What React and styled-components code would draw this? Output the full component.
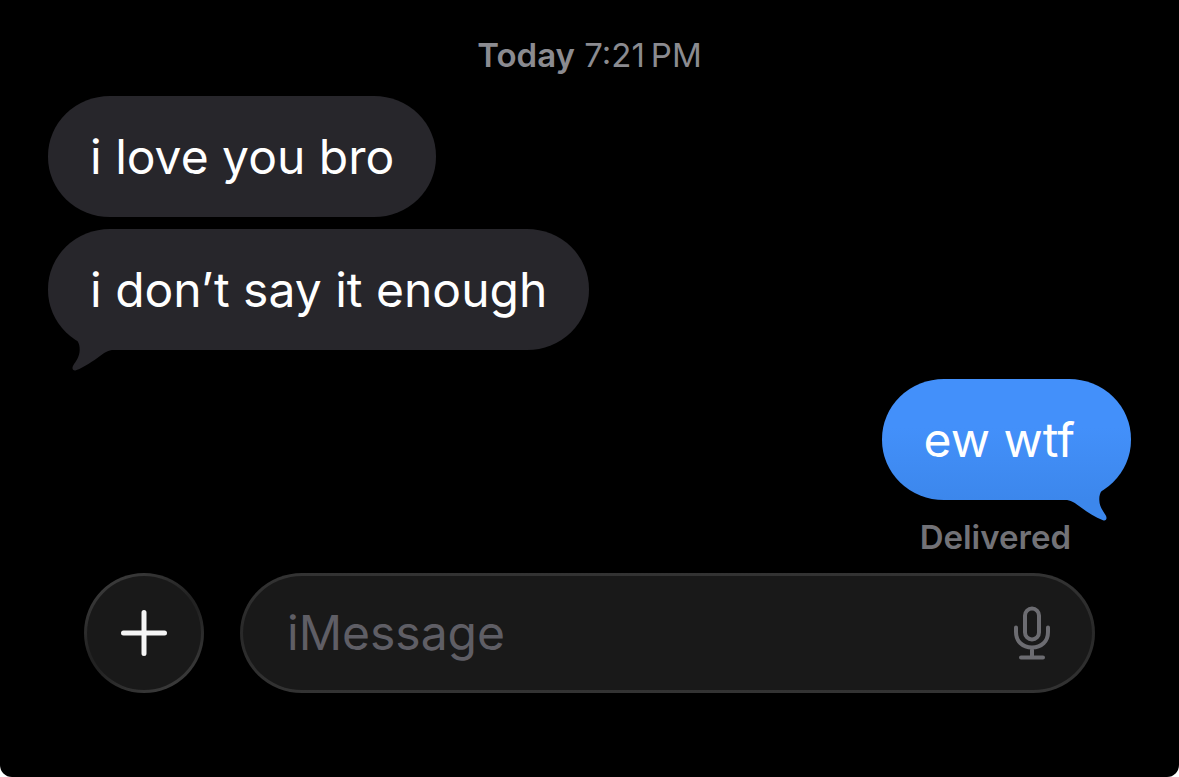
import React, { useState } from 'react';
import styled, { createGlobalStyle } from 'styled-components';

const GlobalStyle = createGlobalStyle`
  * {
    box-sizing: border-box;
  }

  body {
    margin: 0;
    background-color: #fff;
    font-family: Inter, 'Liberation Sans', sans-serif;
  }
`;

const Screen = styled.main`
  display: flex;
  flex-direction: column;
  min-height: 100vh;
  padding: 35px 48px 84px;
  border-radius: 0 0 12px 12px;
  background-color: #000;
`;

const Timestamp = styled.time`
  align-self: center;
  margin-bottom: 21px;
  font-size: 33px;
  line-height: 40px;
  color: #8b8b90;
`;

const Day = styled.span`
  font-weight: 600;
`;

const Messages = styled.div`
  display: flex;
  flex-direction: column;
  gap: 12px;
`;

const Bubble = styled.div`
  position: relative;
  align-self: ${(props) => (props.$sent ? 'flex-end' : 'flex-start')};
  margin-top: ${(props) => (props.$sent ? '17px' : '0')};
  padding: ${(props) => (props.$sent ? '31px 56px 30px 42px' : '31px 42px 30px')};
  border-radius: 62px / 60px;
  font-size: 48px;
  line-height: 60px;
  color: #fff;
  background: ${(props) =>
    props.$sent ? 'linear-gradient(#4390fa 40%, #3c87ec)' : '#27262b'};
`;

const TailShape = styled.svg`
  position: absolute;
  bottom: -22px;
  ${(props) => (props.$sent ? 'right: 0;' : 'left: 0;')}
  width: 70px;
  height: 42px;
  transform: ${(props) => (props.$sent ? 'scaleX(-1)' : 'none')};
`;

const Status = styled.p`
  align-self: flex-end;
  margin: 17px 60px 16px 0;
  font-size: 33px;
  font-weight: 600;
  line-height: 40px;
  color: #727277;
`;

const Composer = styled.form`
  display: flex;
  gap: 36px;
  padding: 0 36px;
`;

const AddButton = styled.button`
  display: flex;
  flex: none;
  align-items: center;
  justify-content: center;
  width: 120px;
  height: 120px;
  padding: 0;
  border: 3px solid transparent;
  border-radius: 50%;
  background:
    linear-gradient(#191919, #191919) padding-box,
    linear-gradient(150deg, #3c3c3c 10%, #222 45%, #222 55%, #3c3c3c 90%) border-box;
  cursor: pointer;
`;

const Field = styled.div`
  display: flex;
  flex: 1;
  align-items: center;
  min-width: 0;
  height: 120px;
  padding: 0 42px 0 44px;
  border: 3px solid transparent;
  border-radius: 62px / 60px;
  background:
    linear-gradient(#191919, #191919) padding-box,
    linear-gradient(#333, #292929 50%, #333) border-box;
`;

const TextInput = styled.input`
  flex: 1;
  min-width: 0;
  padding: 0;
  border: none;
  outline: none;
  background: none;
  font-family: inherit;
  font-size: 48px;
  line-height: 60px;
  color: #fff;

  &::placeholder {
    color: #5f5e65;
    opacity: 1;
  }
`;

const MicButton = styled.button`
  display: flex;
  padding: 0;
  border: none;
  background: none;
  color: #6c6c71;
  cursor: pointer;
`;

const Tail = ({ sent }) => (
  <TailShape $sent={sent} viewBox="0 0 70 42" aria-hidden="true">
    <defs>
      <linearGradient id="sentTail" gradientUnits="userSpaceOnUse" x1="0" y1="-53" x2="0" y2="20">
        <stop offset="0" stopColor="#4390fa" />
        <stop offset="1" stopColor="#3c87ec" />
      </linearGradient>
    </defs>
    <path
      d="M23 4 C29 9 32 13 31.700 20 C31.500 27 28 31 25.200 35.500 C23.500 38.500 25 41.200 28 40.200 C37 37 45 31 52 26 C57 22.500 60 20 66 20 L66 4 Z"
      fill={sent ? 'url(#sentTail)' : '#27262b'}
    />
  </TailShape>
);

const PlusIcon = () => (
  <svg width="46" height="46" viewBox="0 0 46 46" aria-hidden="true">
    <path d="M23 2.500V43.500M2.500 23H43.500" stroke="#f5f5f5" strokeWidth="5" strokeLinecap="round" />
  </svg>
);

const MicIcon = () => (
  <svg width="36" height="54" viewBox="0 0 36 54" fill="none" stroke="currentColor" strokeWidth="4" strokeLinecap="round" aria-hidden="true">
    <rect x="11" y="2.500" width="14" height="31" rx="7" />
    <path d="M2 21.500V26C2 35.500 8.500 41.500 18 41.500S34 35.500 34 26V21.500M18 42V51M7 51.500H29" />
  </svg>
);

const messages = [
  { id: 1, text: 'i love you bro' },
  { id: 2, text: 'i don’t say it enough', tail: true },
  { id: 3, text: 'ew wtf', tail: true, sent: true },
];

const App = () => {
  const [draft, setDraft] = useState('');

  const handleSubmit = (event) => {
    event.preventDefault();
    setDraft('');
  };

  return (
    <>
      <GlobalStyle />
      <Screen>
        <Timestamp>
          <Day>Today</Day> 7:21{'\u202f'}PM
        </Timestamp>
        <Messages>
          {messages.map((message) => (
            <Bubble key={message.id} $sent={message.sent}>
              {message.tail && <Tail sent={message.sent} />}
              {message.text}
            </Bubble>
          ))}
        </Messages>
        <Status>Delivered</Status>
        <Composer onSubmit={handleSubmit}>
          <AddButton type="button" aria-label="Add attachment">
            <PlusIcon />
          </AddButton>
          <Field>
            <TextInput
              type="text"
              aria-label="Message"
              placeholder="iMessage"
              value={draft}
              onChange={(event) => setDraft(event.target.value)}
            />
            <MicButton type="button" aria-label="Dictate">
              <MicIcon />
            </MicButton>
          </Field>
        </Composer>
      </Screen>
    </>
  );
};

export default App;
